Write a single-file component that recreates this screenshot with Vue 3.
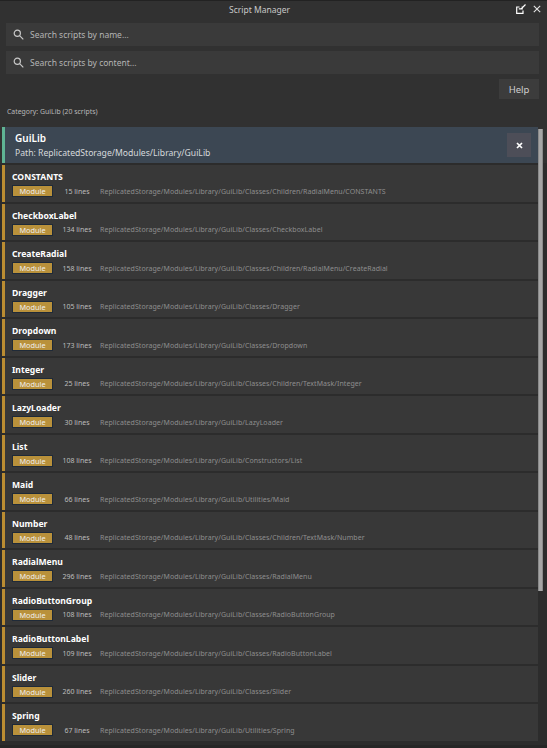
<script setup>
const scripts = [
  ['CONSTANTS', 15, 'Classes/Children/RadialMenu/CONSTANTS'],
  ['CheckboxLabel', 134, 'Classes/CheckboxLabel'],
  ['CreateRadial', 158, 'Classes/Children/RadialMenu/CreateRadial'],
  ['Dragger', 105, 'Classes/Dragger'],
  ['Dropdown', 173, 'Classes/Dropdown'],
  ['Integer', 25, 'Classes/Children/TextMask/Integer'],
  ['LazyLoader', 30, 'LazyLoader'],
  ['List', 108, 'Constructors/List'],
  ['Maid', 66, 'Utilities/Maid'],
  ['Number', 48, 'Classes/Children/TextMask/Number'],
  ['RadialMenu', 296, 'Classes/RadialMenu'],
  ['RadioButtonGroup', 108, 'Classes/RadioButtonGroup'],
  ['RadioButtonLabel', 109, 'Classes/RadioButtonLabel'],
  ['Slider', 260, 'Classes/Slider'],
  ['Spring', 67, 'Utilities/Spring'],
].map(([name, lines, sub]) => ({ name, lines, path: 'ReplicatedStorage/Modules/Library/GuiLib/' + sub }))
const searches = ['Search scripts by name...', 'Search scripts by content...']
</script>

<template>
  <div class="window">
    <header class="titlebar">
      <span class="title">Script Manager</span>
      <div class="controls">
        <svg width="10" height="10" viewBox="0 0 10 10" fill="none" stroke="#fff" stroke-width="1.2">
          <path d="M3.500 3H.7v6.300h6.300V6.500" />
          <path d="M9.500.5 5 5M2.800 4.800h3.400V2.500" />
        </svg>
        <svg width="8" height="8" viewBox="0 0 8 8" fill="none" stroke="#e4e4e4" stroke-width="1.1">
          <path d="M.8.8l6.4 6.4M7.200.8.8 7.200" />
        </svg>
      </div>
    </header>

    <div class="searches">
      <div v-for="s in searches" :key="s" class="search">
        <svg width="11" height="11" viewBox="0 0 11 11" fill="none" stroke="#c8c8c8" stroke-width="1.2">
          <circle cx="4.300" cy="4.300" r="3.100" />
          <path d="M6.600 6.600 10.300 10.300" />
        </svg>
        <span>{{ s }}</span>
      </div>
    </div>

    <div class="help-row"><button class="help">Help</button></div>
    <div class="category">Category: GuiLib (20 scripts)</div>

    <section class="panel">
      <div class="selected">
        <div class="selected-text">
          <div class="selected-name">GuiLib</div>
          <div class="selected-path">Path: ReplicatedStorage/Modules/Library/GuiLib</div>
        </div>
        <button class="close" aria-label="Close">
          <svg width="7" height="7" viewBox="0 0 7 7" fill="none" stroke="#fff" stroke-width="1.700">
            <path d="M1 1l5 5M6 1 1 6" />
          </svg>
        </button>
      </div>
      <div class="list">
        <article v-for="s in scripts" :key="s.name" class="row">
          <div class="name">{{ s.name }}</div>
          <div class="meta">
            <span class="badge">Module</span>
            <span class="lines">{{ s.lines }} lines</span>
            <span class="path">{{ s.path }}</span>
          </div>
        </article>
      </div>
      <div class="scrollbar"></div>
    </section>
    <div class="footer"></div>
  </div>
</template>

<style scoped>
.window { width: 547px; height: 748px; overflow: hidden; box-sizing: border-box; background: #313131; color: #ccc; font-family: "Noto Sans", "Open Sans", sans-serif; border-top: 1px solid #222; }
.titlebar { height: 16px; display: flex; align-items: center; justify-content: center; position: relative; padding-right: 28px; }
.title { font-size: 8.500px; color: #c8c8c8; }
.controls { position: absolute; right: 6px; top: 3px; display: flex; gap: 7px; align-items: center; }
.searches { display: flex; flex-direction: column; gap: 5px; margin: 6px 8px 0 6px; }
.search { height: 23px; background: #3a3a3a; display: flex; align-items: center; gap: 6px; padding-left: 7px; font-size: 8.500px; color: #b4b4b4; }
.help-row { display: flex; justify-content: flex-end; margin: 5px 8px 0 0; }
.help { width: 40px; height: 20px; border: 0; padding: 0; background: #3c3c3c; color: #cfcfcf; font: inherit; font-size: 9.500px; }
.category { margin: 7px 0 0 7px; font-size: 6.900px; line-height: 11px; color: #b8b8b8; }
.panel { position: relative; margin-top: 10px; }
.selected { width: 536px; height: 36px; margin-left: 2px; box-sizing: border-box; background: #3c4753; border-left: 3px solid #5fb394; padding: 0 7px 0 10px; display: flex; justify-content: space-between; align-items: center; }
.selected-text { padding-top: 2px; }
.selected-name { font-size: 10px; line-height: 15px; font-weight: 600; color: #fff; }
.selected-path { font-size: 8.650px; line-height: 15px; color: #d6d9dc; }
.close { width: 24px; height: 24px; border: 0; padding: 0; background: #4d4e58; display: flex; align-items: center; justify-content: center; }
.list { display: flex; flex-direction: column; gap: 2px; padding: 2px 0 4px 2px; background: #2c2c2c; }
.row { width: 536px; height: 36.500px; flex: none; box-sizing: border-box; background: #383838; border-left: 3px solid #bb8d32; padding: 5px 0 0 7px; }
.name { font-size: 8.600px; line-height: 14px; font-weight: 700; color: #fff; }
.meta { display: flex; align-items: center; height: 14px; font-size: 7px; color: #a8a8a8; }
.badge { width: 41px; height: 12px; box-sizing: border-box; line-height: 10px; text-align: center; background: #b9913b; color: #efefef; font-size: 7.300px; border: 1px solid #1f2a38; }
.lines { width: 44px; margin-left: 2px; text-align: center; color: #bcbcbc; }
.path { margin-left: 1px; color: #8e8e8e; letter-spacing: 0.060px; }
.scrollbar { position: absolute; left: 538px; top: 2px; width: 5px; height: 462px; box-sizing: border-box; background: #a6a6a6; border: 1px solid #8a8a8a; border-width: 0 1px; }
.footer { height: 3px; background: #262626; }
</style>
